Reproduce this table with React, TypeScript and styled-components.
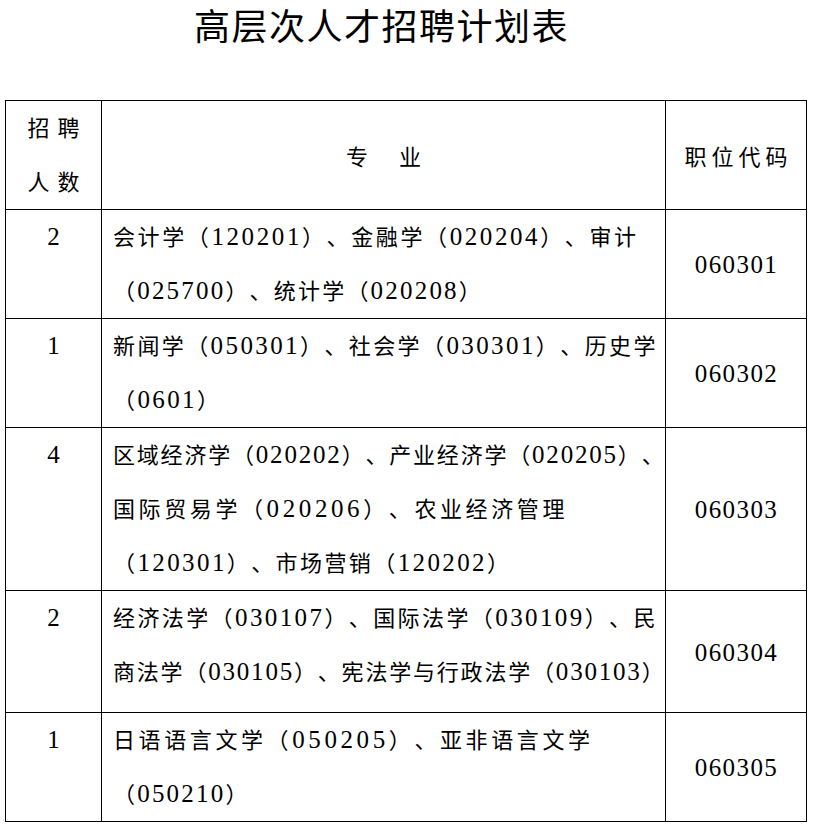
import styled, { createGlobalStyle } from "styled-components";

const GlobalStyle = createGlobalStyle`
  html, body {
    margin: 0;
    padding: 0;
    background: #fff;
  }
  body {
    font-family: "Noto Sans CJK SC", sans-serif;
    color: #000;
  }
`;

interface IPlanRow {
  count: string;
  code: string;
  height: number;
  lines: [string, number][]; // [text, letter-spacing]
}

const rows: IPlanRow[] = [
  {
    count: "2",
    code: "060301",
    height: 109,
    lines: [
      ["会计学（120201）、金融学（020204）、审计", 2.6],
      ["（025700）、统计学（020208）", 2.2],
    ],
  },
  {
    count: "1",
    code: "060302",
    height: 109,
    lines: [
      ["新闻学（050301）、社会学（030301）、历史学", 2.4],
      ["（0601）", 2.4],
    ],
  },
  {
    count: "4",
    code: "060303",
    height: 163,
    lines: [
      ["区域经济学（020202）、产业经济学（020205）、", 1.8],
      ["国际贸易学（020206）、农业经济管理", 3.6],
      ["（120301）、市场营销（120202）", 2.4],
    ],
  },
  {
    count: "2",
    code: "060304",
    height: 122,
    lines: [
      ["经济法学（030107）、国际法学（030109）、民", 2.4],
      ["商法学（030105）、宪法学与行政法学（030103）", 1.8],
    ],
  },
  {
    count: "1",
    code: "060305",
    height: 108,
    lines: [
      ["日语语言文学（050205）、亚非语言文学", 3.6],
      ["（050210）", 2.2],
    ],
  },
];

// digits are set in a serif face, a little larger, like the original SimSun numerals
const withDigits = (text: string) =>
  text.split(/(\d+)/).map((part, i) =>
    /^\d+$/.test(part) ? <Digits key={i}>{part}</Digits> : part
  );

export default function App() {
  return (
    <Page>
      <GlobalStyle />
      <Title>高层次人才招聘计划表</Title>
      <PlanTable>
        <colgroup>
          <Col $w={96} />
          <Col $w={564} />
          <Col $w={141} />
        </colgroup>
        <tbody>
          <Row $h={109}>
            <HeadCell $spacing={8}>
              <Line>招聘</Line>
              <Line>人数</Line>
            </HeadCell>
            <HeadCell $spacing={13}>专 业</HeadCell>
            <HeadCell $spacing={5}>职位代码</HeadCell>
          </Row>
          {rows.map((row) => (
            <Row key={row.code} $h={row.height}>
              <CountCell>
                <Line>
                  <Digits>{row.count}</Digits>
                </Line>
              </CountCell>
              <MajorCell>
                {row.lines.map(([text, spacing]) => (
                  <Line key={text} style={{ letterSpacing: spacing }}>
                    {withDigits(text)}
                  </Line>
                ))}
              </MajorCell>
              <CodeCell>
                <Digits>{row.code}</Digits>
              </CodeCell>
            </Row>
          ))}
        </tbody>
      </PlanTable>
    </Page>
  );
}

const Page = styled.div`
  width: 813px;
  padding: 0 0 4px 5px;
  box-sizing: border-box;
`;

const Title = styled.div`
  margin: 0 0 52px 0;
  padding-right: 55px;
  font-family: "Noto Sans CJK SC", sans-serif;
  font-weight: 400;
  font-size: 36px;
  line-height: 48px;
  letter-spacing: 1.5px;
  text-align: center;
`;

const PlanTable = styled.table`
  border-collapse: collapse;
  table-layout: fixed;
  width: 802px;
  font-family: "Noto Sans CJK SC", sans-serif;
  font-size: 22px;
  color: #000;
  text-spacing-trim: space-all;
  font-kerning: none;
`;

const Col = styled.col<{ $w: number }>`
  width: ${({ $w }) => $w}px;
`;

const Row = styled.tr<{ $h: number }>`
  height: ${({ $h }) => $h}px;
`;

const Cell = styled.td`
  border: 1px solid #000;
  padding: 0;
  line-height: 50px;
  white-space: nowrap;
  text-spacing-trim: space-all;
`;

const HeadCell = styled(Cell)<{ $spacing: number }>`
  text-align: center;
  vertical-align: middle;
  letter-spacing: ${({ $spacing }) => $spacing}px;
  padding-left: ${({ $spacing }) => $spacing}px;
`;

const CountCell = styled(Cell)`
  text-align: center;
  vertical-align: top;
`;

const MajorCell = styled(Cell)`
  vertical-align: top;
  padding: 0 4px 0 11px;
`;

const CodeCell = styled(Cell)`
  text-align: center;
  vertical-align: middle;
  letter-spacing: 1.4px;
  padding-left: 1px;
`;

const Line = styled.div`
  height: 54px;
  line-height: 50px;
`;

const Digits = styled.span`
  font-family: "Liberation Serif", serif;
  font-size: 25px;
`;
